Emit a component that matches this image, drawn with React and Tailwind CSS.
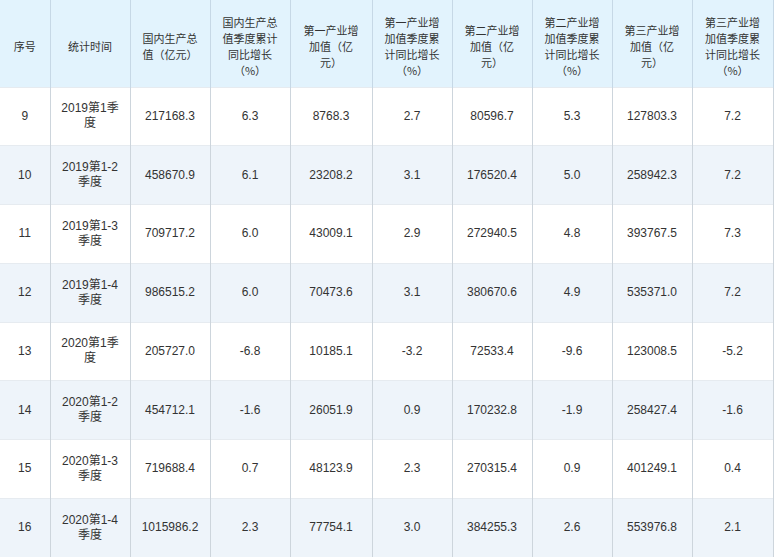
const headers = [
  '序号',
  '统计时间',
  '国内生产总值（亿元）',
  '国内生产总值季度累计同比增长（%）',
  '第一产业增加值（亿元）',
  '第一产业增加值季度累计同比增长（%）',
  '第二产业增加值（亿元）',
  '第二产业增加值季度累计同比增长（%）',
  '第三产业增加值（亿元）',
  '第三产业增加值季度累计同比增长（%）',
];

const rows = [
  ['9', '2019第1季度', '217168.3', '6.3', '8768.3', '2.7', '80596.7', '5.3', '127803.3', '7.2'],
  ['10', '2019第1-2季度', '458670.9', '6.1', '23208.2', '3.1', '176520.4', '5.0', '258942.3', '7.2'],
  ['11', '2019第1-3季度', '709717.2', '6.0', '43009.1', '2.9', '272940.5', '4.8', '393767.5', '7.3'],
  ['12', '2019第1-4季度', '986515.2', '6.0', '70473.6', '3.1', '380670.6', '4.9', '535371.0', '7.2'],
  ['13', '2020第1季度', '205727.0', '-6.8', '10185.1', '-3.2', '72533.4', '-9.6', '123008.5', '-5.2'],
  ['14', '2020第1-2季度', '454712.1', '-1.6', '26051.9', '0.9', '170232.8', '-1.9', '258427.4', '-1.6'],
  ['15', '2020第1-3季度', '719688.4', '0.7', '48123.9', '2.3', '270315.4', '0.9', '401249.1', '0.4'],
  ['16', '2020第1-4季度', '1015986.2', '2.3', '77754.1', '3.0', '384255.3', '2.6', '553976.8', '2.1'],
];

const widths = [50, 80, 80, 80, 82, 80, 80, 80, 80, 81];

export default function App() {
  return (
    <div className="w-[775px] h-[557px] overflow-hidden bg-white font-['Liberation_Sans','Noto_Sans_CJK_SC',sans-serif] text-[#333]">
      <table className="table-fixed border-collapse w-[773px]">
        <colgroup>
          {widths.map((w, i) => (
            <col key={i} style={{ width: w }} />
          ))}
        </colgroup>
        <thead>
          <tr className="h-[87px] bg-[#e2f3fd]">
            {headers.map((h, i) => (
              <th
                key={i}
                className="px-[9px] pt-[5px] font-['Noto_Sans_CJK_SC',sans-serif] [text-spacing-trim:space-all] text-[11px] leading-[16px] font-normal text-center align-middle border-r border-[#c6d8e6]"
              >
                {h}
              </th>
            ))}
          </tr>
        </thead>
        <tbody>
          {rows.map((r, ri) => (
            <tr
              key={ri}
              className={`h-[58.75px] border-t border-[#e6ebf0] ${ri % 2 === 1 ? 'bg-[#eef4fa]' : 'bg-white'}`}
            >
              {r.map((c, ci) => (
                <td
                  key={ci}
                  className="px-2 text-[12px] leading-[15px] text-center align-middle border-r border-[#cdd5dc]"
                >
                  {c}
                </td>
              ))}
            </tr>
          ))}
        </tbody>
      </table>
    </div>
  );
}
